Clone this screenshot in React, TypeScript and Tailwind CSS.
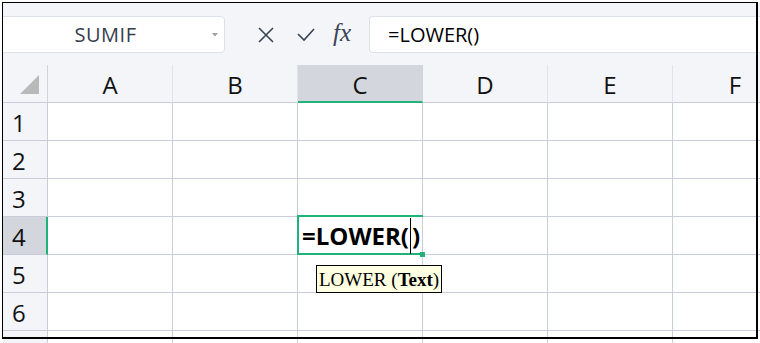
import React from 'react';

const columns = ['A', 'B', 'C', 'D', 'E', 'F', 'G'];
const rows = [1, 2, 3, 4, 5, 6, 7];

function NameBox() {
  return (
    <div className="flex h-[37px] w-[223px] shrink-0 items-center rounded-r-[4px] border border-[#dde1e8] bg-white">
      <div className="flex-1 pr-[4px] text-center text-[20px] tracking-[0.5px] text-[#353d4d]">SUMIF</div>
      <svg width="6" height="4" viewBox="0 0 6 4" className="mr-[6px]">
        <path d="M0 0 L6 0 L3 3.5 Z" fill="#9aa0ab" />
      </svg>
    </div>
  );
}

function FormulaIcons() {
  return (
    <div className="relative h-[37px] w-[144px] shrink-0">
      {/* cancel */}
      <svg width="18" height="18" viewBox="0 0 18 18" className="absolute left-[32px] top-[10px]">
        <path d="M2 2 L16 16 M16 2 L2 16" stroke="#3a4356" strokeWidth="1.6" fill="none" />
      </svg>
      {/* enter */}
      <svg width="20" height="18" viewBox="0 0 20 18" className="absolute left-[71px] top-[11px]">
        <path d="M2 7 L8 13 L18 2" stroke="#3a4356" strokeWidth="1.6" fill="none" />
      </svg>
      <span className="absolute left-[108px] top-[2px] font-['Liberation_Serif',serif] text-[25px] italic leading-[30px] text-[#3a4356]">
        fx
      </span>
    </div>
  );
}

function HeaderRow() {
  return (
    <div className="flex h-[38px]">
      <div className="relative h-[38px] w-[46px] shrink-0 border-r border-b border-r-[#cfd4dd] border-b-[#c8cdd9] bg-[#f3f5f8]">
        <svg width="19" height="19" viewBox="0 0 19 19" className="absolute left-[18px] top-[10px]">
          <path d="M19 0 L19 19 L0 19 Z" fill="#b9b9b9" />
        </svg>
      </div>
      {columns.map((c) => (
        <div
          key={c}
          className={
            c === 'C'
              ? 'flex h-[38px] w-[125px] shrink-0 items-center justify-center border-r border-b-2 border-r-[#cfd4dd] border-b-[#21b27a] bg-[#d3d6dc] pt-[3px] text-[24px] text-[#111]'
              : 'flex h-[38px] w-[125px] shrink-0 items-center justify-center border-r border-b border-r-[#dfe3ea] border-b-[#c8cdd9] bg-[#f3f5f8] pt-[3px] text-[24px] text-[#111]'
          }
        >
          {c}
        </div>
      ))}
    </div>
  );
}

function ActiveCell() {
  return (
    <div className="absolute -left-[1px] -top-[2px] z-10 h-[40px] w-[126px] border-t-2 border-l-2 border-b-2 border-[#21b27a]">
      <div className="flex h-full items-center pl-[3px] pt-[2px] text-[24px] font-bold leading-none text-black">
        <span>=LOWER(</span>
        <span className="mx-[1px] inline-block h-[36px] w-px bg-black" />
        <span>)</span>
      </div>
      <div className="absolute left-[121px] top-[35px] h-[5px] w-[5px] bg-[#21b27a]" />
      {/* function hint */}
      <div className="absolute left-[17px] top-[48px] flex h-[28px] items-center whitespace-nowrap border border-black bg-[#ffffe1] px-[2px] font-['Liberation_Serif',serif] text-[19px] leading-none text-black">
        LOWER (<b>Text</b>)
      </div>
    </div>
  );
}

function DataRow({ n }: { n: number }) {
  const selected = n === 4;
  return (
    <div className="flex h-[38px]">
      <div
        className={
          selected
            ? 'flex h-[38px] w-[46px] shrink-0 items-center border-r-2 border-b border-r-[#21b27a] border-b-[#c8cdd9] bg-[#d3d6dc] pl-[10px] pt-[3px] text-[24px] text-[#111]'
            : 'flex h-[38px] w-[46px] shrink-0 items-center border-r border-b border-r-[#c8cdd9] border-b-[#c8cdd9] bg-[#f3f5f8] pl-[10px] pt-[3px] text-[24px] text-[#111]'
        }
      >
        {n}
      </div>
      {columns.map((c) => (
        <div
          key={c}
          className={
            selected && c === 'C'
              ? 'relative z-10 h-[38px] w-[125px] shrink-0 border-r border-b border-[#c8cdd9] bg-white'
              : 'relative h-[38px] w-[125px] shrink-0 border-r border-b border-[#c8cdd9] bg-white'
          }
        >
          {selected && c === 'C' ? <ActiveCell /> : null}
        </div>
      ))}
    </div>
  );
}

export default function App() {
  return (
    <div className="relative h-[343px] w-[760px] overflow-hidden bg-white font-['Open_Sans',sans-serif]">
      <div className="pl-[2px] pt-[2px]">
        <div className="w-[758px] bg-[#f3f5f8]">
          <div className="flex h-[63px] items-start pt-[14px]">
            <NameBox />
            <FormulaIcons />
            <div className="flex h-[37px] flex-1 items-center rounded-l-[4px] border border-r-0 border-[#dde1e8] bg-white pl-[18px] text-[20px] text-black">
              =LOWER()
            </div>
          </div>
        </div>
        <HeaderRow />
        {rows.map((r) => (
          <DataRow key={r} n={r} />
        ))}
      </div>
      <div className="pointer-events-none absolute left-[2px] top-[2px] z-20 h-[337px] w-[756px] border-t border-l border-r-2 border-b-2 border-black" />
    </div>
  );
}
